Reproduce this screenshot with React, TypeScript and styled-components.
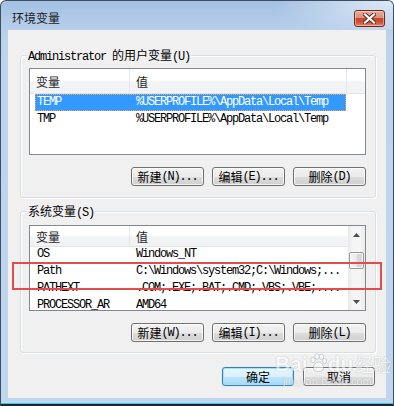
import React from "react";
import styled, { createGlobalStyle } from "styled-components";

const GlobalStyle = createGlobalStyle`
  html, body {
    margin: 0;
    padding: 0;
    background: #ffffff;
  }
  body {
    font-family: "Noto Sans CJK SC", "Noto Sans", sans-serif;
    font-size: 12px;
    color: #000;
  }
`;

const Window = styled.div`
  position: relative;
  width: 394px;
  height: 406px;
  box-sizing: border-box;
  display: flex;
  flex-direction: column;
  border: 1px solid #3d4e62;
  border-bottom: none;
  border-radius: 6px 6px 0 0;
  background: linear-gradient(to bottom, #a3c0e2 0px, #b3cce9 22px, #bdd4ec 40px, #c0d6ee 100%);
  overflow: hidden;
`;

const TitleBar = styled.div`
  height: 29px;
  display: flex;
  align-items: flex-start;
  justify-content: space-between;
  padding-left: 11px;
  padding-right: 8px;
  background: radial-gradient(ellipse 120px 40px at 100% 0%, rgba(235, 243, 251, 0.8), rgba(235, 243, 251, 0) 100%);
`;

const Title = styled.div`
  margin-top: 10px;
  font-family: "Noto Sans CJK SC", sans-serif;
  font-size: 12px;
  line-height: 14px;
  color: #1b1b1b;
`;

const CloseButton = styled.div`
  margin-top: 9px;
  width: 31px;
  height: 17px;
  box-sizing: border-box;
  border: 1px solid #6b2a1d;
  border-radius: 3px;
  display: flex;
  align-items: center;
  justify-content: center;
  background: linear-gradient(to bottom, #e9ab9b 0%, #dc8f7b 45%, #c6472d 50%, #cf5134 75%, #e2876a 100%);
  box-shadow: inset 0 0 0 1px rgba(255, 230, 220, 0.45);
`;

const Client = styled.div`
  margin: 0 7px;
  height: 368px;
  box-sizing: border-box;
  background: #f0f0f0;
  display: flex;
  flex-direction: column;
  padding: 0 10px 0 12px;
`;

const GroupBox = styled.div<{ $top: number; $pad: number }>`
  margin-top: ${(p) => p.$top}px;
  border: 1px solid #d5dfe5;
  border-radius: 3px;
  box-shadow: inset 1px 1px 0 #ffffff, 1px 1px 0 #ffffff;
  display: flex;
  flex-direction: column;
  padding: 0 9px ${(p) => p.$pad}px 8px;
`;

const Legend = styled.div`
  align-self: flex-start;
  margin: -8px 0 0 -2px;
  padding: 0 1px;
  height: 14px;
  line-height: 14px;
  background: #f0f0f0;
  font-family: "Noto Sans CJK SC", sans-serif;
  font-size: 12px;
  white-space: nowrap;
`;

const Mono = styled.span`
  font-family: "Liberation Mono", monospace;
  font-size: 12px;
  letter-spacing: -1.2px;
`;

const ListView = styled.div<{ $top: number; $h: number }>`
  margin-top: ${(p) => p.$top}px;
  height: ${(p) => p.$h}px;
  box-sizing: border-box;
  border: 1px solid #828790;
  background: #ffffff;
  display: flex;
  overflow: hidden;
`;

const ListMain = styled.div`
  flex: 1;
  display: flex;
  flex-direction: column;
  overflow: hidden;
`;

const Header = styled.div<{ $h: number }>`
  height: ${(p) => p.$h}px;
  flex: none;
  box-sizing: border-box;
  display: flex;
  border-bottom: 1px solid #e5e5e5;
  background: linear-gradient(to bottom, #ffffff 0%, #ffffff 45%, #f3f4f6 55%, #f1f2f4 100%);
`;

const HeaderCell = styled.div<{ $w?: number }>`
  ${(p) => (p.$w ? `width: ${p.$w}px;` : "flex: 1;")}
  flex-shrink: 0;
  box-sizing: border-box;
  padding-left: 6px;
  display: flex;
  align-items: center;
  border-right: 1px solid #e3e8ee;
  font-family: "Noto Sans CJK SC", sans-serif;
  font-size: 12px;
  color: #1e1e1e;

  &:last-child {
    border-right: none;
  }
`;

const Rows = styled.div<{ $shift?: number }>`
  display: flex;
  flex-direction: column;
  margin-top: ${(p) => p.$shift ?? 0}px;
`;

const Row = styled.div<{ $selected?: boolean }>`
  margin-left: 5px;
  width: 311px;
  height: 17px;
  box-sizing: border-box;
  display: flex;
  align-items: center;
  flex: none;
  background: ${(p) => (p.$selected ? "#3399ff" : "transparent")};
  color: ${(p) => (p.$selected ? "#ffffff" : "#000000")};
  border: 1px dotted ${(p) => (p.$selected ? "#f2a64a" : "transparent")};
`;

const Cell = styled.div<{ $w?: number; $pad: number }>`
  ${(p) => (p.$w ? `width: ${p.$w}px;` : "flex: 1;")}
  flex-shrink: 0;
  box-sizing: border-box;
  padding-left: ${(p) => p.$pad}px;
  font-family: "Liberation Mono", monospace;
  font-size: 12px;
  letter-spacing: -1.2px;
  line-height: 15px;
  white-space: nowrap;
  overflow: hidden;
`;

const ScrollBar = styled.div`
  width: 17px;
  flex: none;
  display: flex;
  flex-direction: column;
  align-items: center;
  background: linear-gradient(to right, #e9e9e9 0%, #f5f5f5 30%, #f5f5f5 70%, #ececec 100%);
`;

const ArrowBox = styled.div`
  width: 17px;
  height: 17px;
  display: flex;
  align-items: center;
  justify-content: center;
  flex: none;
`;

const Thumb = styled.div<{ $top: number }>`
  margin-top: ${(p) => p.$top}px;
  width: 15px;
  height: 17px;
  box-sizing: border-box;
  border: 1px solid #979797;
  border-radius: 2px;
  background: linear-gradient(to right, #f5f5f5 0%, #e9e9e9 50%, #d6d6d6 51%, #d9d9d9 100%);
  box-shadow: inset 0 0 0 1px rgba(255, 255, 255, 0.8);
`;

const Track = styled.div`
  flex: 1;
`;

const ButtonRow = styled.div<{ $top: number; $gap: number }>`
  margin-top: ${(p) => p.$top}px;
  display: flex;
  justify-content: flex-end;
  gap: ${(p) => p.$gap}px;
`;

const Button = styled.div<{ $w: number; $default?: boolean }>`
  width: ${(p) => p.$w}px;
  height: 19px;
  box-sizing: border-box;
  border: 1px solid ${(p) => (p.$default ? "#3c7fb1" : "#707070")};
  border-radius: 3px;
  display: flex;
  align-items: center;
  justify-content: center;
  white-space: nowrap;
  font-family: "Noto Sans CJK SC", sans-serif;
  font-size: 12px;
  line-height: 14px;
  color: #000;
  background: ${(p) =>
    p.$default
      ? "linear-gradient(to bottom, #eaf6fd 0%, #d9f0fc 50%, #bee6fd 51%, #a7d9f5 100%)"
      : "linear-gradient(to bottom, #f2f2f2 0%, #ebebeb 50%, #dddddd 51%, #cfcfcf 100%)"};
  box-shadow: ${(p) =>
    p.$default
      ? "inset 0 0 0 1px #9fe3fb, 0 0 1px #6fc2ee"
      : "inset 0 0 0 1px rgba(255, 255, 255, 0.75)"};
`;

const DialogButtons = styled.div`
  margin-top: 14px;
  padding-right: 1px;
  display: flex;
  justify-content: flex-end;
  gap: 9px;
`;

const BottomEdge = styled.div`
  margin-top: auto;
  height: 2px;
  border-top: 1px solid #35c8ec;
  background: #1d2733;
`;

const Annotation = styled.div`
  position: absolute;
  left: 11px;
  top: 261px;
  width: 370px;
  height: 28px;
  box-sizing: border-box;
  border: 2px solid #e64b4b;
  pointer-events: none;
`;

const Watermark = styled.div`
  position: absolute;
  left: 274px;
  top: 352px;
  display: flex;
  flex-direction: column;
  align-items: flex-start;
  pointer-events: none;
  opacity: 0.55;
`;

const WatermarkMain = styled.div`
  display: flex;
  align-items: flex-end;
  font-family: "Liberation Sans", Arial, sans-serif;
  font-weight: bold;
  font-size: 21px;
  line-height: 22px;
  color: #ffffff;
  text-shadow: 0 0 1px #9aa0a6, 0 0 1px #9aa0a6;
`;

const WatermarkCjk = styled.span`
  font-family: "Noto Sans CJK SC", sans-serif;
  font-size: 18px;
  font-weight: normal;
  margin-left: 2px;
`;

const WatermarkUrl = styled.div`
  margin-left: 8px;
  margin-top: 1px;
  font-family: "Liberation Sans", Arial, sans-serif;
  font-size: 11px;
  line-height: 11px;
  color: #ffffff;
  text-shadow: 0 0 1px #a0a4a8, 0 0 1px #a0a4a8;
`;

type Var = { name: string; value: string; selected?: boolean };

const userVars: Var[] = [
  { name: "TEMP", value: "%USERPROFILE%\\AppData\\Local\\Temp", selected: true },
  { name: "TMP", value: "%USERPROFILE%\\AppData\\Local\\Temp" },
];

const sysVars: Var[] = [
  { name: "OS", value: "Windows_NT" },
  { name: "Path", value: "C:\\Windows\\system32;C:\\Windows;..." },
  { name: "PATHEXT", value: ".COM;.EXE;.BAT;.CMD;.VBS;.VBE;...." },
  { name: "PROCESSOR_AR", value: "AMD64" },
];

const CloseIcon = () => (
  <svg width="13" height="11" viewBox="0 0 13 11">
    <path d="M2 1.5 L11 9.5 M11 1.5 L2 9.5" stroke="#5a2a22" strokeWidth="4" strokeLinecap="square" />
    <path d="M2 1.5 L11 9.5 M11 1.5 L2 9.5" stroke="#ffffff" strokeWidth="2.2" strokeLinecap="square" />
  </svg>
);

const Arrow = ({ up }: { up?: boolean }) => (
  <svg width="7" height="4" viewBox="0 0 7 4">
    <path d={up ? "M0 4 L3.5 0 L7 4 Z" : "M0 0 L7 0 L3.5 4 Z"} fill="#4d4d4d" />
  </svg>
);

const ButtonLabel = ({ cjk, mono }: { cjk: string; mono: string }) => (
  <>
    {cjk}
    <Mono>{mono}</Mono>
  </>
);

const VarRows = ({ vars }: { vars: Var[] }) => (
  <>
    {vars.map((v) => (
      <Row key={v.name} $selected={v.selected}>
        <Cell $w={93} $pad={1}>
          {v.name}
        </Cell>
        <Cell $pad={7}>{v.value}</Cell>
      </Row>
    ))}
  </>
);

export default function App() {
  return (
    <>
      <GlobalStyle />
      <Window>
        <TitleBar>
          <Title>环境变量</Title>
          <CloseButton>
            <CloseIcon />
          </CloseButton>
        </TitleBar>

        <Client>
          <GroupBox $top={25} $pad={11}>
            <Legend>
              <Mono>Administrator </Mono>的用户变量<Mono>(U)</Mono>
            </Legend>
            <ListView $top={6} $h={87}>
              <ListMain>
                <Header $h={25}>
                  <HeaderCell $w={100}>变量</HeaderCell>
                  <HeaderCell $w={217}>值</HeaderCell>
                  <HeaderCell />
                </Header>
                <Rows>
                  <VarRows vars={userVars} />
                </Rows>
              </ListMain>
            </ListView>
            <ButtonRow $top={12} $gap={8}>
              <Button $w={73}>
                <ButtonLabel cjk="新建" mono="(N)..." />
              </Button>
              <Button $w={73}>
                <ButtonLabel cjk="编辑" mono="(E)..." />
              </Button>
              <Button $w={73}>
                <ButtonLabel cjk="删除" mono="(D)" />
              </Button>
            </ButtonRow>
          </GroupBox>

          <GroupBox $top={13} $pad={10}>
            <Legend>
              系统变量<Mono>(S)</Mono>
            </Legend>
            <ListView $top={7} $h={86}>
              <ListMain>
                <Header $h={21}>
                  <HeaderCell $w={100}>变量</HeaderCell>
                  <HeaderCell>值</HeaderCell>
                </Header>
                <Rows $shift={-1}>
                  <VarRows vars={sysVars} />
                </Rows>
              </ListMain>
              <ScrollBar>
                <ArrowBox>
                  <Arrow up />
                </ArrowBox>
                <Thumb $top={9} />
                <Track />
                <ArrowBox>
                  <Arrow />
                </ArrowBox>
              </ScrollBar>
            </ListView>
            <ButtonRow $top={12} $gap={8}>
              <Button $w={73}>
                <ButtonLabel cjk="新建" mono="(W)..." />
              </Button>
              <Button $w={73}>
                <ButtonLabel cjk="编辑" mono="(I)..." />
              </Button>
              <Button $w={73}>
                <ButtonLabel cjk="删除" mono="(L)" />
              </Button>
            </ButtonRow>
          </GroupBox>

          <DialogButtons>
            <Button $w={72} $default>
              确定
            </Button>
            <Button $w={72}>取消</Button>
          </DialogButtons>
        </Client>

        <BottomEdge />

        <Annotation />
        <Watermark>
          <WatermarkMain>
            Bai
            <svg width="18" height="20" viewBox="0 0 18 20" style={{ margin: "0 1px 2px" }}>
              <g fill="#ffffff" stroke="#9aa0a6" strokeWidth="0.8">
                <ellipse cx="4" cy="7" rx="2.2" ry="2.8" />
                <ellipse cx="8" cy="3.5" rx="2.2" ry="2.8" />
                <ellipse cx="12.5" cy="3.8" rx="2.2" ry="2.8" />
                <ellipse cx="15.5" cy="8" rx="2" ry="2.6" />
                <path d="M9.5 9 C5 9 3.5 15 5 17 C7 19 12 19 14 17 C15.5 15 14 9 9.5 9 Z" />
              </g>
            </svg>
            du
            <WatermarkCjk>经验</WatermarkCjk>
          </WatermarkMain>
          <WatermarkUrl>jingyan.baidu.com</WatermarkUrl>
        </Watermark>
      </Window>
    </>
  );
}
